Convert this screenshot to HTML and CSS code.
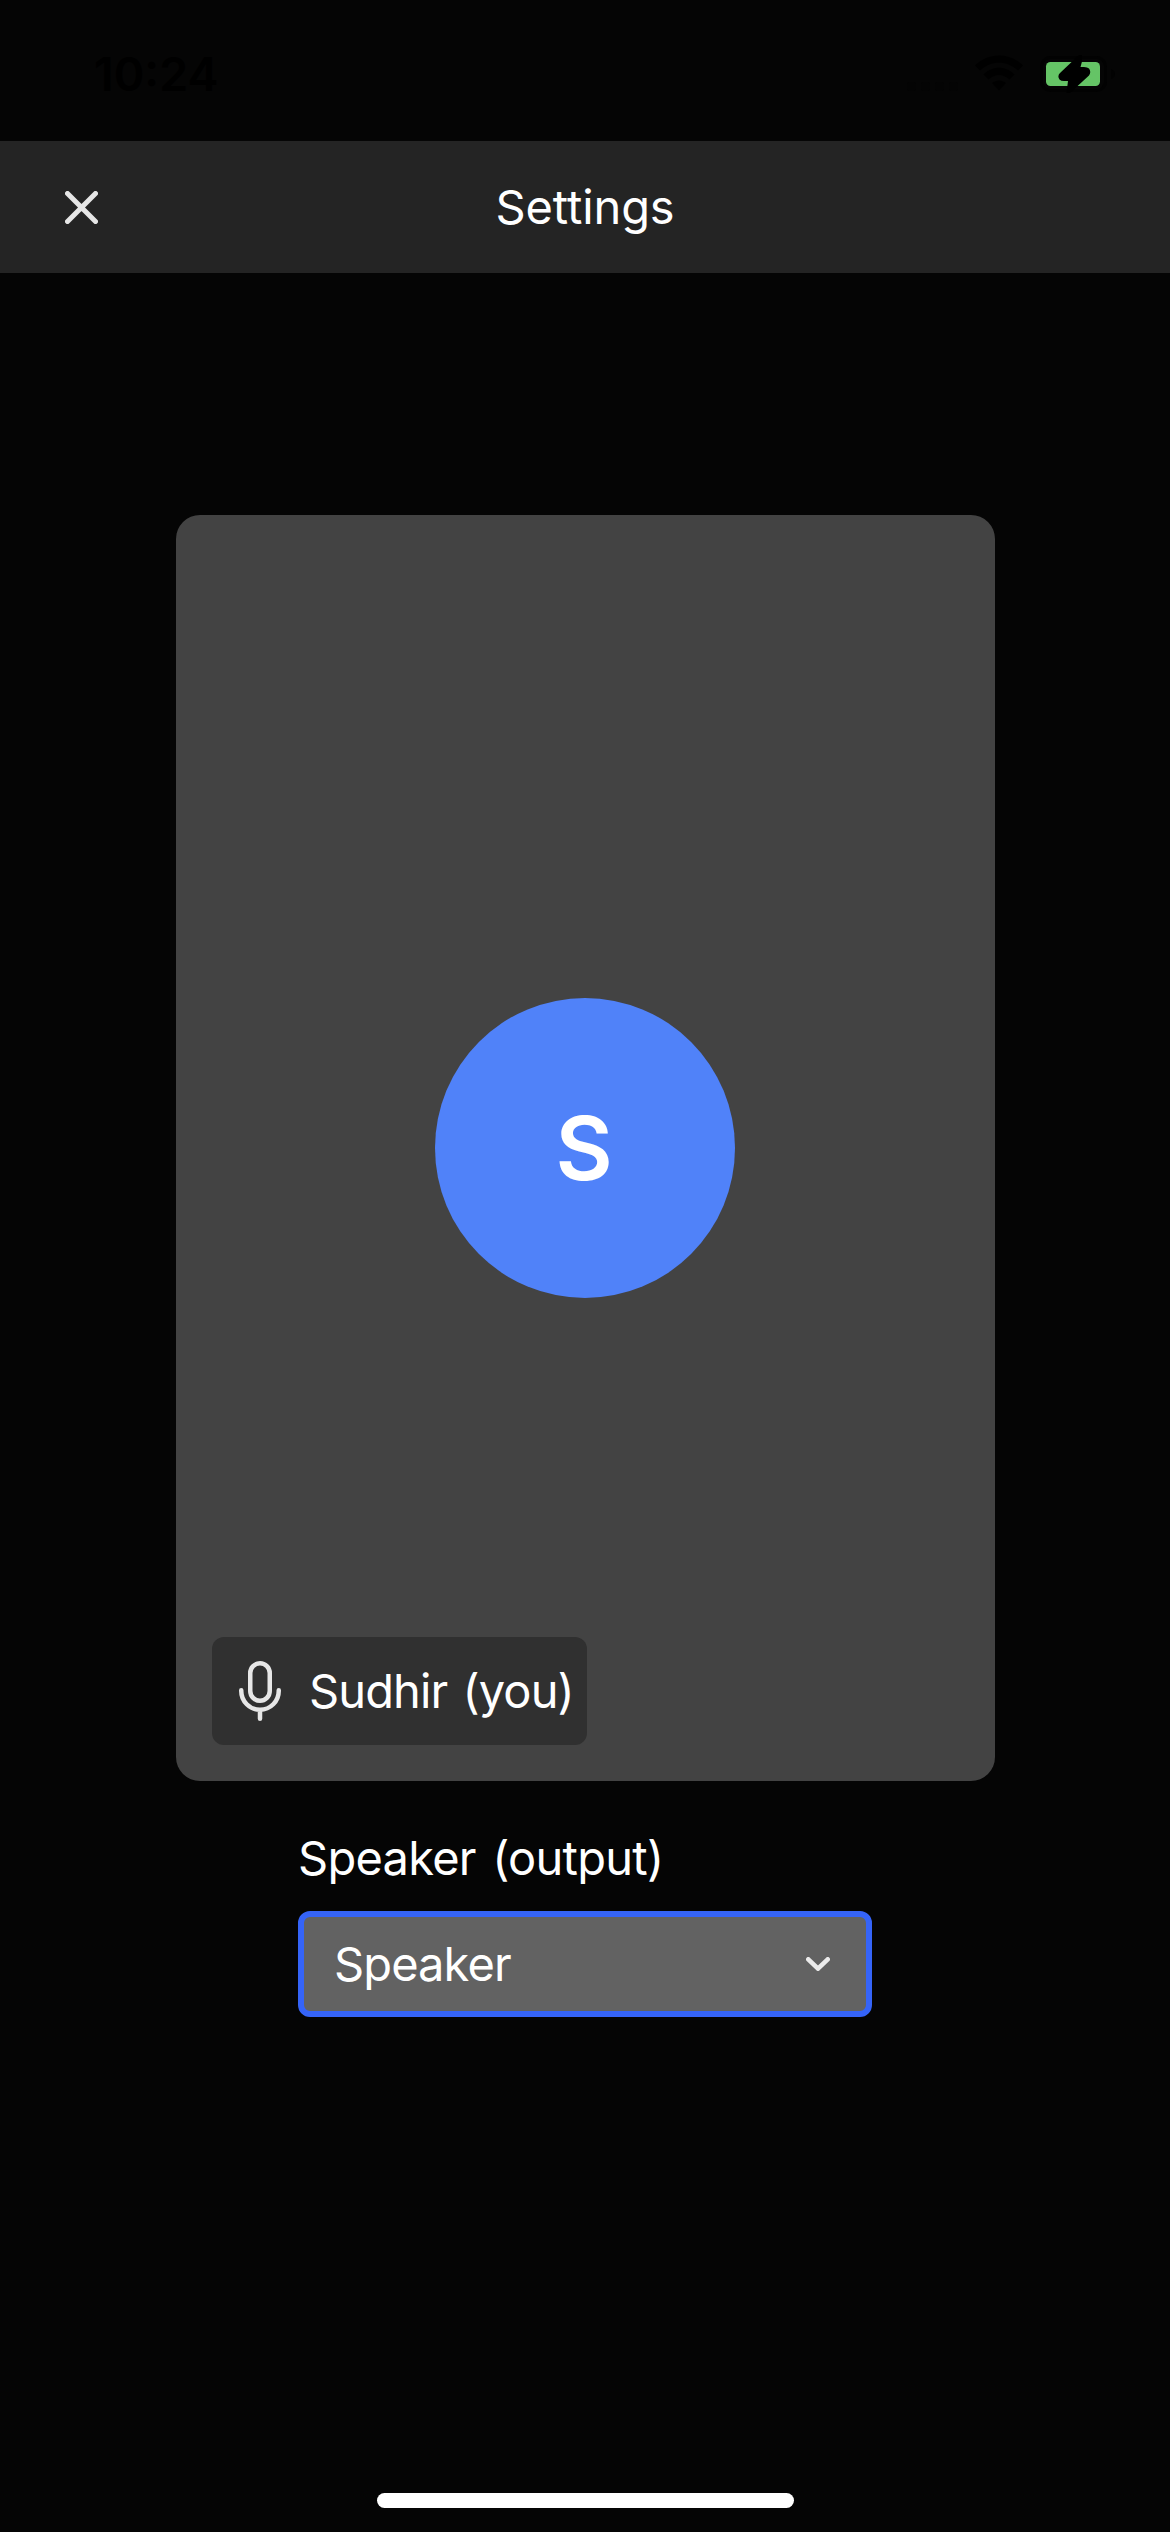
FILE: index.html
```html
<!DOCTYPE html>
<html lang="en">
<head>
<meta charset="utf-8">
<title>Settings</title>
<link rel="stylesheet" href="styles.css">
</head>
<body>
<div class="screen">
  <div class="status">
    <span class="time">10:24</span>
    <div class="indicators">
      <svg class="signal" width="52" height="9" viewBox="0 0 52 9"><rect width="9" height="9" rx="2"/><rect x="14" width="9" height="9" rx="2"/><rect x="28" width="9" height="9" rx="2"/><rect x="42" width="9" height="9" rx="2"/></svg>
      <svg class="wifi" width="48" height="36" viewBox="0 0 48 36"><path d="M0 10.500C13-3 35-3 48 10.500L43 15.500C32 5 16 5 5 15.500Z"/><path d="M8.500 19.500C17 10.500 31 10.500 39.500 19.500L34.500 24.500C28 18.500 20 18.500 13.500 24.500Z"/><path d="M17 28C21 24.500 27 24.500 31 28L24 35.500Z"/></svg>
      <svg class="battery" width="76" height="40" viewBox="0 0 76 40"><rect x="1.500" y="3.500" width="64" height="33" rx="9" fill="none" stroke="#020202" stroke-width="3"/><path d="M71 15q4 1.500 4 5t-4 5Z" fill="#020202"/><rect x="6" y="8" width="54" height="24" rx="4.500" fill="#65c466"/><path d="M39 1L20 19Q17 22 19.500 25.500Q21 27 24 27H28L26.500 39H30L49 21.500Q51.500 18 49 14.500Q47.500 13 44 13H40.500L42 7.500V1Z" fill="#000"/></svg>
    </div>
  </div>
  <header class="header">
    <svg class="close" width="33" height="33" viewBox="0 0 33 33"><path d="M2.500 2.500L30.500 30.500M30.500 2.500L2.500 30.500"/></svg>
    <h1 class="title">Settings</h1>
  </header>
  <main class="content">
    <section class="tile">
      <div class="avatar"><span class="initial">S</span></div>
      <div class="name-tag">
        <svg class="mic" width="42" height="60" viewBox="0 0 42 60"><rect x="11.250" y="2.250" width="19.500" height="37.500" rx="9.750"/><path d="M2.250 29.250V30A18.750 18.750 0 0 0 39.750 30V29.250M21 49V57.750"/></svg>
        <span class="name">Sudhir (you)</span>
      </div>
    </section>
    <section class="output">
      <div class="label"><span class="label-text">Speaker (output)</span></div>
      <div class="select">
        <span class="value">Speaker</span>
        <svg class="chevron" width="24" height="14" viewBox="0 0 24 14"><path d="M2.300 2.300L12 11.700L21.700 2.300"/></svg>
      </div>
    </section>
  </main>
  <div class="home"></div>
</div>
</body>
</html>
```
FILE: styles.css
```css
* { box-sizing: border-box; }
body { margin: 0; background: #050505; }
svg { display: block; flex: none; }
.screen {
  width: 1170px;
  height: 2532px;
  display: flex;
  flex-direction: column;
  background: #050505;
  color: #fff;
  font-family: Inter, "Liberation Sans", sans-serif;
  font-size: 47px;
  line-height: 60px;
  white-space: nowrap;
}
.status {
  height: 141px;
  padding: 44px 54px 0 94px;
  display: flex;
  justify-content: space-between;
  align-items: flex-start;
  color: #000;
}
.time { font-size: 46.5px; font-weight: 600; }
.indicators { display: flex; align-items: flex-start; }
.signal { margin: 38px 16px 0 0; fill: #040404; }
.wifi { margin: 11px 17px 0 0; }
.battery { margin-top: 10px; }
.header {
  height: 132px;
  background: #242424;
  display: grid;
  grid-template-columns: 1fr auto 1fr;
  align-items: center;
}
.close { margin-left: 65px; stroke: #e6e6e6; stroke-width: 5; stroke-linecap: round; }
.title { margin: 0; font-size: inherit; font-weight: 400; letter-spacing: -0.1px; }
.content {
  flex: 1;
  display: flex;
  flex-direction: column;
  align-items: center;
  padding-top: 242px;
}
.tile {
  width: 819px;
  height: 1266px;
  margin-left: 1px;
  border-radius: 24px;
  background: #434343;
  display: grid;
  grid-template-rows: 483px 300px 1fr;
  padding-bottom: 36px;
}
.avatar {
  grid-row: 2;
  margin-left: 259px;
  width: 300px;
  height: 300px;
  border-radius: 50%;
  background: #5082f9;
  display: flex;
  align-items: center;
  justify-content: center;
  font-size: 88px;
  font-weight: 600;
}
.initial { margin-right: 2px; }
.name-tag {
  grid-row: 3;
  align-self: end;
  margin-left: 36px;
  width: 375px;
  height: 108px;
  border-radius: 12px;
  background: #303030;
  display: flex;
  align-items: center;
  gap: 28px;
  padding-left: 27px;
}
.name { letter-spacing: -0.9px; word-spacing: 3px; }
.mic { fill: none; stroke: #e6e6e6; stroke-width: 4.500; stroke-linecap: round; }
.output { width: 574px; padding-top: 47px; }
.label { height: 83px; letter-spacing: -0.75px; word-spacing: 4px; }
.value { letter-spacing: -0.9px; }
.select {
  height: 106px;
  border: 6px solid #3564f8;
  border-radius: 12px;
  background: #626262;
  display: flex;
  align-items: center;
  justify-content: space-between;
  padding: 0 36px 0 30px;
}
.chevron { fill: none; stroke: #ebebeb; stroke-width: 4.600; stroke-linecap: round; stroke-linejoin: round; }
.home {
  align-self: center;
  width: 417px;
  height: 15px;
  margin-bottom: 24px;
  border-radius: 8px;
  background: #fff;
}
```
